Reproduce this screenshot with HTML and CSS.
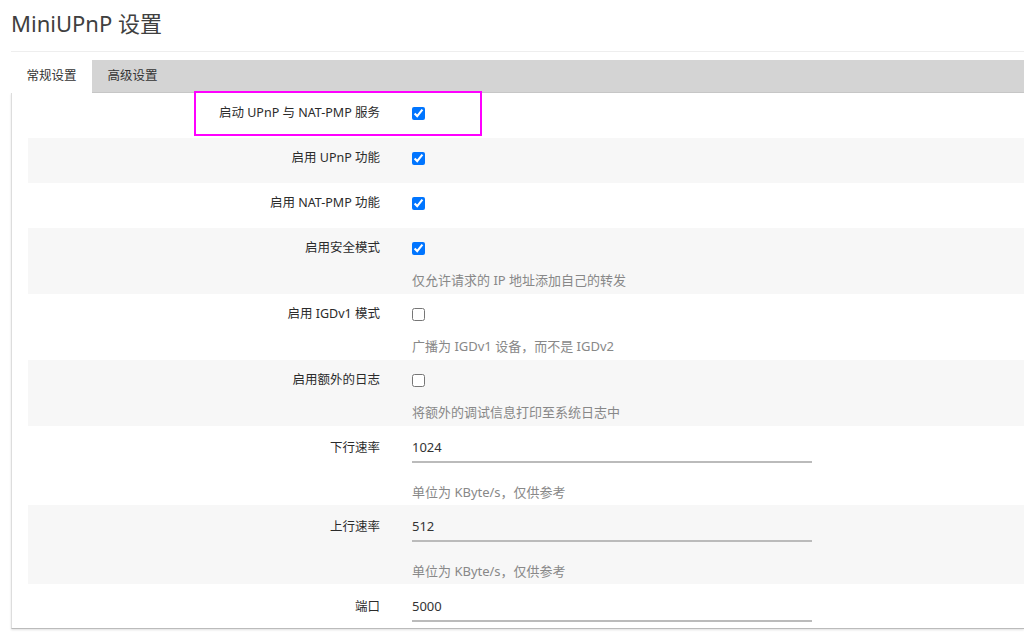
FILE: index.html
```html
<!DOCTYPE html>
<html lang="zh-CN">
<head>
<meta charset="utf-8">
<title>MiniUPnP 设置</title>
<link rel="stylesheet" href="styles.css">
</head>
<body>
<div class="page">
  <h2 class="title">MiniUPnP 设置</h2>
  <div class="tabs">
    <div class="tab active">常规设置</div>
    <div class="tab">高级设置</div>
  </div>
  <div class="panel">
    <div class="row">
      <div class="label">启动 UPnP 与 NAT-PMP 服务</div>
      <div class="field"><input type="checkbox" checked></div>
      <div class="highlight"></div>
    </div>
    <div class="row">
      <div class="label">启用 UPnP 功能</div>
      <div class="field"><input type="checkbox" checked></div>
    </div>
    <div class="row">
      <div class="label">启用 NAT-PMP 功能</div>
      <div class="field"><input type="checkbox" checked></div>
    </div>
    <div class="row desc-row">
      <div class="label">启用安全模式</div>
      <div class="field"><input type="checkbox" checked></div>
      <div class="desc">仅允许请求的 IP 地址添加自己的转发</div>
    </div>
    <div class="row desc-row">
      <div class="label">启用 IGDv1 模式</div>
      <div class="field"><input type="checkbox"></div>
      <div class="desc">广播为 IGDv1 设备，而不是 IGDv2</div>
    </div>
    <div class="row desc-row">
      <div class="label">启用额外的日志</div>
      <div class="field"><input type="checkbox"></div>
      <div class="desc">将额外的调试信息打印至系统日志中</div>
    </div>
    <div class="row input-row desc-row">
      <div class="label">下行速率</div>
      <div class="field"><input class="text" type="text" value="1024"></div>
      <div class="desc">单位为 KByte/s，仅供参考</div>
    </div>
    <div class="row input-row desc-row">
      <div class="label">上行速率</div>
      <div class="field"><input class="text" type="text" value="512"></div>
      <div class="desc">单位为 KByte/s，仅供参考</div>
    </div>
    <div class="row input-row">
      <div class="label">端口</div>
      <div class="field"><input class="text" type="text" value="5000"></div>
    </div>
  </div>
</div>
</body>
</html>
```

FILE: styles.css
```css
html, body {
  margin: 0;
  padding: 0;
  background: #fff;
}

body {
  font-family: "Noto Sans", "Noto Sans CJK SC", sans-serif;
  font-size: 13px;
  color: #333;
  overflow: hidden;
}

.page {
  padding-left: 11px;
}

.title {
  margin: 7px 0 0;
  padding: 0 0 12px;
  font-size: 22px;
  line-height: 32px;
  font-weight: normal;
  color: #404040;
  border-bottom: 1px solid #eee;
}

.tabs {
  margin-top: 8px;
  display: flex;
  background: #d4d4d4;
  border-bottom: 1px solid #c8c8c8;
  height: 32px;
}

.tab {
  padding: 0 15.5px;
  line-height: 32px;
  font-size: 12.5px;
  color: #333;
}

.tab.active {
  background: #fff;
  height: 33px;
  margin-bottom: -1px;
}

.panel {
  border-left: 1px solid #ddd;
  border-bottom: 1px solid #bbb;
  box-shadow: 0 1px 2px rgba(0, 0, 0, 0.12);
  padding: 0 0 0 16px;
  margin-bottom: 8px;
}

.row {
  position: relative;
  display: grid;
  grid-template-columns: 352px 400px;
  column-gap: 32px;
  align-items: center;
  padding: 10px 0 15px;
}

.row:nth-child(even) {
  background: #f7f7f7;
}

.row.desc-row {
  padding-bottom: 4px;
}

.label {
  text-align: right;
  line-height: 20px;
  font-size: 12.5px;
  color: #2b2b2b;
}

.field {
  display: flex;
  align-items: center;
  height: 20px;
}

.field input[type="checkbox"] {
  margin: 0;
  width: 13px;
  height: 13px;
}

.desc {
  grid-column: 2;
  margin-top: 12px;
  line-height: 20px;
  color: #888;
}

.input-row {
  padding: 6px 0 6px;
}

.input-row.desc-row {
  padding: 5px 0 3px;
}

.input-row .label {
  align-self: start;
  margin-top: 7px;
}

.input-row .field {
  height: 32px;
}

.input-row .desc {
  margin-top: 19px;
}

.text {
  box-sizing: border-box;
  width: 400px;
  height: 32px;
  margin: 0;
  padding: 2px 0 0;
  border: 0;
  border-bottom: 2px solid #bbb;
  background: transparent;
  font-family: "Noto Sans", "Noto Sans CJK SC", sans-serif;
  font-size: 13px;
  color: #333;
  outline: none;
}

.highlight {
  position: absolute;
  left: 166px;
  top: -2px;
  width: 284px;
  height: 41px;
  border: 2px solid #ff00ff;
  pointer-events: none;
}
```
